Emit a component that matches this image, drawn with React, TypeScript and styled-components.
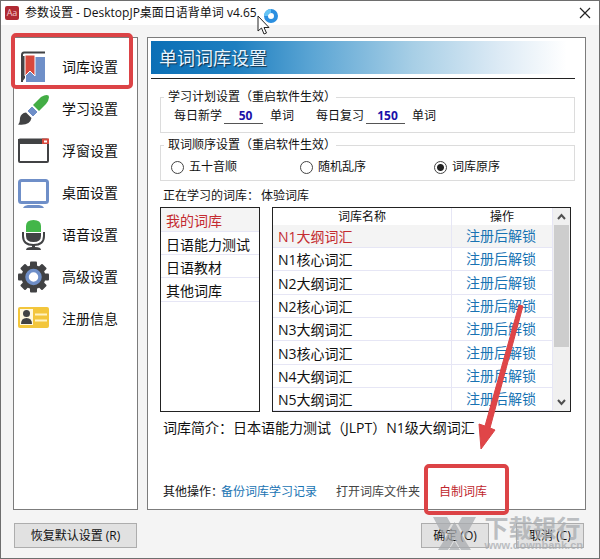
import React, { useState } from "react";
import styled, { createGlobalStyle, css } from "styled-components";

const GlobalStyle = createGlobalStyle`
  * { box-sizing: border-box; }
  body {
    margin: 0;
    font-family: "Open Sans", "Noto Sans CJK SC", sans-serif;
    font-size: 12px;
    line-height: 16px;
    color: #111;
  }
  button, input { font: inherit; color: inherit; }
`;

const Window = styled.div`
  position: relative;
  display: flex;
  flex-direction: column;
  min-height: 100vh;
  border: 1px solid #6e6e6e;
  background: #f4f4f4;
`;

const TitleBar = styled.header`
  display: flex;
  align-items: center;
  height: 24px;
  padding: 0 8px 0 4px;
  background: #fff;
`;

const AppIcon = styled.span`
  width: 14px;
  height: 14px;
  margin-right: 6px;
  border-radius: 2px;
  background: #b02a33;
  color: #f3c9cc;
  font-size: 9px;
  line-height: 13px;
  text-align: center;
`;

const WindowTitle = styled.h1`
  position: relative;
  margin: 0;
  font-size: 12px;
  font-weight: 400;
  line-height: 16px;
  white-space: nowrap;
`;

const Pointer = styled.svg`
  position: absolute;
  left: 232px;
  top: -1px;
  z-index: 3;
`;

const CloseButton = styled.button`
  display: flex;
  margin-left: auto;
  padding: 0;
  border: 0;
  background: none;
`;

const Body = styled.div`
  flex: 1;
  display: grid;
  grid-template-columns: 125px 1fr;
  gap: 9px;
  padding: 12px 13px 0 12px;
`;

const panel = css`
  border: 1px solid #7c7c7c;
  background: #fff;
`;

const Sidebar = styled.nav`
  ${panel}
  padding-top: 8px;
`;

const NavItem = styled.a`
  position: relative;
  display: flex;
  align-items: center;
  gap: 13px;
  height: 42px;
  padding-left: 3px;
  color: #111;
  font-size: 14px;
  line-height: 20px;
  text-decoration: none;
`;

const Highlight = styled.span<{ $area: "nav" | "link" }>`
  position: absolute;
  inset: ${(p) => (p.$area === "nav" ? "-13px 4px -1px -3px" : "-20px -22px -15px -15px")};
  z-index: 2;
  border: 4px solid #dc4346;
  border-radius: 5px;
  pointer-events: none;
`;

const Main = styled.main`
  ${panel}
  display: flex;
  flex-direction: column;
  padding: 3px 10px 9px 3px;
`;

const Banner = styled.h2`
  margin: 0 0 4px;
  padding-left: 8px;
  height: 33px;
  background: linear-gradient(90deg, #0b6fb6 0%, #1e7fc0 20%, #5ba5d4 38%, #a8cfe6 62%, #dceaf5 82%, #fff 98%);
  color: #e8f5ff;
  font-size: 18px;
  font-weight: 400;
  line-height: 34px;
  text-shadow: 1px 1px 1px #12324d;
`;

const Content = styled.div`
  flex: 1;
  display: flex;
  flex-direction: column;
  padding: 10px 0 0 9px;
  border-top: 1px solid #222;
`;

const Group = styled.fieldset`
  height: 44px;
  margin: 0 0 4px;
  padding: 0 0 0 10px;
  border: 1px solid #dcdcdc;
`;

const Legend = styled.legend`
  margin-left: -7px;
  padding: 0 0 0 4px;
`;

const PlanRow = styled.div`
  display: flex;
  align-items: center;
  height: 22px;
  padding-left: 3px;
`;

const PlanField = styled.label`
  display: flex;
  align-items: center;
  width: 142px;
`;

const NumberInput = styled.input`
  width: 39px;
  height: 16px;
  margin: 0 7px 0 2px;
  padding: 0 0 0 4px;
  border: 0;
  border-bottom: 1px solid #555;
  background: none;
  color: #1a10a8;
  font-weight: 700;
  text-align: center;
`;

const RadioRow = styled.div`
  display: grid;
  grid-template-columns: 129px 134px auto;
  align-items: center;
  height: 28px;
`;

const RadioLabel = styled.label`
  display: flex;
  align-items: center;
  gap: 5px;
`;

const Radio = styled.input`
  appearance: none;
  width: 13px;
  height: 13px;
  margin: 0;
  border: 1px solid #444;
  border-radius: 50%;
  background: #fff;
  &:checked {
    background: radial-gradient(circle, #222 0 3px, #fff 4px);
  }
`;

const Current = styled.p`
  display: flex;
  gap: 2px;
  margin: 3px 0 3px 3px;
`;

const Lists = styled.div`
  display: grid;
  grid-template-columns: 100px 1fr;
  gap: 12px;
  height: 205px;
  padding-right: 4px;
`;

const Categories = styled.ul`
  margin: 0;
  padding: 0;
  border: 1px solid #222;
  list-style: none;
`;

const Category = styled.li<{ $active: boolean }>`
  height: 23px;
  border-bottom: 1px solid #e6e6f5;
  background: ${(p) => (p.$active ? "#f4f4f4" : "#fff")};
  &:nth-child(3n + 1) { height: 24px; }
`;

const CategoryButton = styled.button<{ $active: boolean }>`
  width: 100%;
  height: 100%;
  padding: 3px 0 0 5px;
  border: 0;
  background: none;
  color: ${(p) => (p.$active ? "#c42b30" : "#111")};
  font-size: 14px;
  line-height: 20px;
  text-align: left;
  white-space: nowrap;
`;

const TableFrame = styled.div`
  display: flex;
  border: 1px solid #222;
  overflow: hidden;
`;

const WordTable = styled.table`
  flex: 1;
  border-collapse: separate;
  border-spacing: 0;
  table-layout: fixed;
`;

const HeadCell = styled.th<{ $narrow?: boolean }>`
  width: ${(p) => (p.$narrow ? "101px" : "auto")};
  height: 17px;
  padding: 0;
  border-right: 1px solid #e6e6f5;
  font-weight: 400;
  line-height: 16px;
`;

const Row = styled.tr<{ $active: boolean }>`
  height: 23px;
  background: ${(p) => (p.$active ? "#f4f4f4" : "#fff")};
  color: ${(p) => (p.$active ? "#c42b30" : "#111")};
  &:nth-child(3n) { height: 24px; }
`;

const Cell = styled.td<{ $center?: boolean }>`
  padding: ${(p) => (p.$center ? "0 2px 0 0" : "2px 0 0 5px")};
  border-right: 1px solid #e6e6f5;
  border-bottom: 1px solid #e6e6f5;
  font-size: 14px;
  line-height: 20px;
  text-align: ${(p) => (p.$center ? "center" : "left")};
`;

const TextLink = styled.a<{ $tone?: "blue" | "red" | "gray" }>`
  position: relative;
  justify-self: start;
  color: ${(p) => (p.$tone === "red" ? "#c0272d" : p.$tone === "gray" ? "#444" : "#1873b3")};
  text-decoration: none;
  white-space: nowrap;
`;

const ScrollBar = styled.div`
  display: flex;
  flex-direction: column;
  width: 17px;
  padding: 0 1px;
  background: #f0f0f0;
`;

const ScrollButton = styled.button`
  display: flex;
  align-items: center;
  justify-content: center;
  height: 17px;
  padding: 0;
  border: 0;
  background: none;
`;

const Track = styled.div`
  flex: 1;
`;

const Thumb = styled.div`
  height: 72%;
  background: #cdcdcd;
`;

const Intro = styled.p`
  margin: 6px 0 0 3px;
  font-size: 14px;
  line-height: 20px;
`;

const Actions = styled.div`
  position: relative;
  display: grid;
  grid-template-columns: 58px 115px 103px auto;
  margin: auto 0 0 3px;
  white-space: nowrap;
`;

const Arrow = styled.svg`
  position: absolute;
  left: 32px;
  top: -182px;
  z-index: 2;
  pointer-events: none;
`;

const Footer = styled.footer`
  display: flex;
  align-items: flex-start;
  gap: 27px;
  padding: 13px 15px 10px 13px;
`;

const PushButton = styled.button<{ $wide?: boolean }>`
  width: ${(p) => (p.$wide ? "123px" : "68px")};
  height: 25px;
  margin-right: ${(p) => (p.$wide ? "auto" : "0")};
  padding: 0;
  border: 1px solid #adadad;
  background: #e1e1e1;
  white-space: nowrap;
`;

const Watermark = styled.div`
  position: absolute;
  right: 16px;
  bottom: 7px;
  display: flex;
  align-items: center;
  gap: 8px;
  color: #a9acb0;
  opacity: 0.75;
  pointer-events: none;
`;

const WatermarkText = styled.div`
  font-size: 24px;
  font-weight: 700;
  line-height: 24px;
`;

const WatermarkSite = styled.div`
  font-family: "Liberation Sans", sans-serif;
  font-size: 11px;
  font-weight: 700;
  line-height: 11px;
`;

const dark = "#414244";
const blue = "#6f8fc8";
const red = "#d8483c";

const BookIcon = () => (
  <svg width="32" height="32" viewBox="0 0 32 32">
    <path d="M28 1.500H7Q5 1.500 5 4V31" fill="none" stroke={dark} strokeWidth="2" />
    <path d="M4 5H8V27L5 31H4Z" fill={dark} />
    <path d="M9 5H28V31H9Z" fill={blue} />
    <path d="M8 4H18V25L13 20L8 25Z" fill={red} stroke="#fff" strokeWidth="1" />
    <path d="M18 4H28V6H18Z" fill="#fff" />
  </svg>
);

const BrushIcon = () => (
  <svg width="32" height="32" viewBox="0 0 32 32">
    <path d="M16 12L24 4Q29 1 31.500 2.500Q33 6 29 11L22 18Z" fill="#43ad45" />
    <path d="M15 13L21 19L16 24L10 18Z" fill={blue} stroke="#fff" strokeWidth="1" />
    <path d="M9 19.500L14.500 25Q13 33 1 31.500Q3 30 3 25Q4 20 9 19.500Z" fill={dark} />
  </svg>
);

const WindowIcon = () => (
  <svg width="32" height="32" viewBox="0 0 32 32">
    <rect x="2" y="4.500" width="29" height="22.500" rx="1" fill="#fff" stroke={dark} strokeWidth="2" />
    <path d="M1 4H32V9H1Z" fill={dark} />
    <path d="M25 3.500H32V9H25Z" fill={red} />
    <path d="M27 5.500H30V7.500H27Z" fill="#fff" />
  </svg>
);

const MonitorIcon = () => (
  <svg width="32" height="32" viewBox="0 0 32 32">
    <rect x="2.500" y="3.500" width="28" height="22" rx="2" fill="#fff" stroke={blue} strokeWidth="3" />
    <path d="M6 31Q7 28.500 11 28H22Q26 28.500 27 31Z" fill={blue} />
  </svg>
);

const MicIcon = () => (
  <svg width="32" height="32" viewBox="0 0 32 32">
    <path d="M9 13V7Q9 1 16.500 1T24 7V13Z" fill="#43b649" />
    <path d="M9 14H24V17Q24 23 16.500 23T9 17Z" fill={dark} />
    <path d="M6 13V17Q6 26 16.500 26T27 17V13" fill="none" stroke={dark} strokeWidth="2" />
    <path d="M15 26H18V28Q24 28 24 31H9Q9 28 15 28Z" fill={dark} />
  </svg>
);

const GearIcon = () => (
  <svg width="32" height="32" viewBox="0 0 32 32">
    <g fill={dark}>
      <circle cx="16.500" cy="16" r="12" />
      {[0, 45, 90, 135].map((angle) => (
        <rect key={angle} x="13" y="0.500" width="7" height="31" rx="1" transform={`rotate(${angle} 16.500 16)`} />
      ))}
    </g>
    <circle cx="16.500" cy="16" r="6.500" fill="#fff" stroke={blue} strokeWidth="3.500" />
  </svg>
);

const CardIcon = () => (
  <svg width="32" height="32" viewBox="0 0 32 32">
    <rect x="1" y="4" width="31" height="21" rx="2" fill="#f3c63c" />
    <path d="M3 6H16V22H3Z" fill="#fff8df" />
    <circle cx="9.500" cy="10.500" r="3.500" fill={dark} />
    <path d="M4 21Q4 15 9.500 15T15 21Z" fill={dark} />
    <path d="M18 11.500H30M18 17.500H30" stroke="#fff3c4" strokeWidth="2" />
  </svg>
);

const navItems = [
  { label: "词库设置", Icon: BookIcon },
  { label: "学习设置", Icon: BrushIcon },
  { label: "浮窗设置", Icon: WindowIcon },
  { label: "桌面设置", Icon: MonitorIcon },
  { label: "语音设置", Icon: MicIcon },
  { label: "高级设置", Icon: GearIcon },
  { label: "注册信息", Icon: CardIcon },
];

const orders = ["五十音顺", "随机乱序", "词库原序"];
const categories = ["我的词库", "日语能力测试", "日语教材", "其他词库"];
const words = ["N1大纲词汇", "N1核心词汇", "N2大纲词汇", "N2核心词汇", "N3大纲词汇", "N3核心词汇", "N4大纲词汇", "N5大纲词汇"];

const Chevron = ({ down }: { down?: boolean }) => (
  <svg width="9" height="7" viewBox="0 0 9 7">
    <path d={down ? "M1 1L4.500 5L8 1" : "M1 6L4.500 2L8 6"} fill="none" stroke="#505050" strokeWidth="2" />
  </svg>
);

export default function App() {
  const [order, setOrder] = useState("词库原序");
  const [category, setCategory] = useState("我的词库");

  return (
    <>
      <GlobalStyle />
      <Window>
        <TitleBar>
          <AppIcon aria-hidden="true">Aa</AppIcon>
          <WindowTitle>
            参数设置 - DesktopJP桌面日语背单词 v4.65
            <Pointer width="24" height="32" viewBox="0 0 24 32" aria-hidden="true">
              <circle cx="14" cy="12" r="5" fill="#fff" stroke="#2b8fe0" strokeWidth="4" />
              <path d="M9 12A5 5 0 0 1 14 7" fill="none" stroke="#64c4f5" strokeWidth="4" />
              <path d="M1 12V27L4.500 24L7 30L9.500 29L7 23.500H12Z" fill="#fff" stroke="#222" strokeWidth="1" />
            </Pointer>
          </WindowTitle>
          <CloseButton aria-label="关闭">
            <svg width="12" height="12" viewBox="0 0 12 12">
              <path d="M1 1L11 11M11 1L1 11" stroke="#222" strokeWidth="1.200" />
            </svg>
          </CloseButton>
        </TitleBar>

        <Body>
          <Sidebar>
            {navItems.map(({ label, Icon }, i) => (
              <NavItem key={label} href="#">
                <Icon />
                {label}
                {i === 0 && <Highlight $area="nav" />}
              </NavItem>
            ))}
          </Sidebar>

          <Main>
            <Banner>单词词库设置</Banner>
            <Content>
              <Group>
                <Legend>学习计划设置（重启软件生效）</Legend>
                <PlanRow>
                  <PlanField>
                    每日新学
                    <NumberInput defaultValue="50" />
                    单词
                  </PlanField>
                  <PlanField>
                    每日复习
                    <NumberInput defaultValue="150" />
                    单词
                  </PlanField>
                </PlanRow>
              </Group>
              <Group>
                <Legend>取词顺序设置（重启软件生效）</Legend>
                <RadioRow>
                  {orders.map((name) => (
                    <RadioLabel key={name}>
                      <Radio type="radio" name="order" checked={order === name} onChange={() => setOrder(name)} />
                      {name}
                    </RadioLabel>
                  ))}
                </RadioRow>
              </Group>
              <Current>
                <span>正在学习的词库：</span>
                <span>体验词库</span>
              </Current>
              <Lists>
                <Categories>
                  {categories.map((name) => (
                    <Category key={name} $active={name === category}>
                      <CategoryButton $active={name === category} onClick={() => setCategory(name)}>
                        {name}
                      </CategoryButton>
                    </Category>
                  ))}
                </Categories>
                <TableFrame>
                  <WordTable>
                    <thead>
                      <tr>
                        <HeadCell>词库名称</HeadCell>
                        <HeadCell $narrow>操作</HeadCell>
                      </tr>
                    </thead>
                    <tbody>
                      {words.map((word, i) => (
                        <Row key={word} $active={i === 0}>
                          <Cell>{word}</Cell>
                          <Cell $center>
                            <TextLink href="#">注册后解锁</TextLink>
                          </Cell>
                        </Row>
                      ))}
                    </tbody>
                  </WordTable>
                  <ScrollBar>
                    <ScrollButton aria-label="向上滚动">
                      <Chevron />
                    </ScrollButton>
                    <Track>
                      <Thumb />
                    </Track>
                    <ScrollButton aria-label="向下滚动">
                      <Chevron down />
                    </ScrollButton>
                  </ScrollBar>
                </TableFrame>
              </Lists>
              <Intro>词库简介：日本语能力测试（JLPT）N1级大纲词汇</Intro>
              <Actions>
                <span>其他操作：</span>
                <TextLink href="#">备份词库学习记录</TextLink>
                <TextLink href="#" $tone="gray">打开词库文件夹</TextLink>
                <TextLink href="#" $tone="red">
                  自制词库
                  <Highlight $area="link" />
                  <Arrow width="56" height="152" viewBox="0 0 56 152" aria-hidden="true">
                    <path d="M48 3L52 4L19 126L24 128L10 147L8 122L14 124Z" fill="#e04548" stroke="#d84447" strokeWidth="1" />
                  </Arrow>
                </TextLink>
              </Actions>
            </Content>
          </Main>
        </Body>

        <Footer>
          <PushButton $wide>恢复默认设置 (R)</PushButton>
          <PushButton>确定 (O)</PushButton>
          <PushButton>取消 (C)</PushButton>
        </Footer>
        <Watermark>
          <svg width="43" height="33" viewBox="0 0 43 33" aria-hidden="true">
            <path
              d="M0 0H14L18 7L10 21L7 13ZM43 0H29L25 7L33 21L36 13ZM21.500 5L33 25L38 33H28L21.500 22L15 33H5L10 25Z"
              fill="currentColor"
            />
            <path d="M21.500 24L27 33H16Z" fill="currentColor" />
          </svg>
          <div>
            <WatermarkText>下载银行</WatermarkText>
            <WatermarkSite>www.downbank.cn</WatermarkSite>
          </div>
        </Watermark>
      </Window>
    </>
  );
}
